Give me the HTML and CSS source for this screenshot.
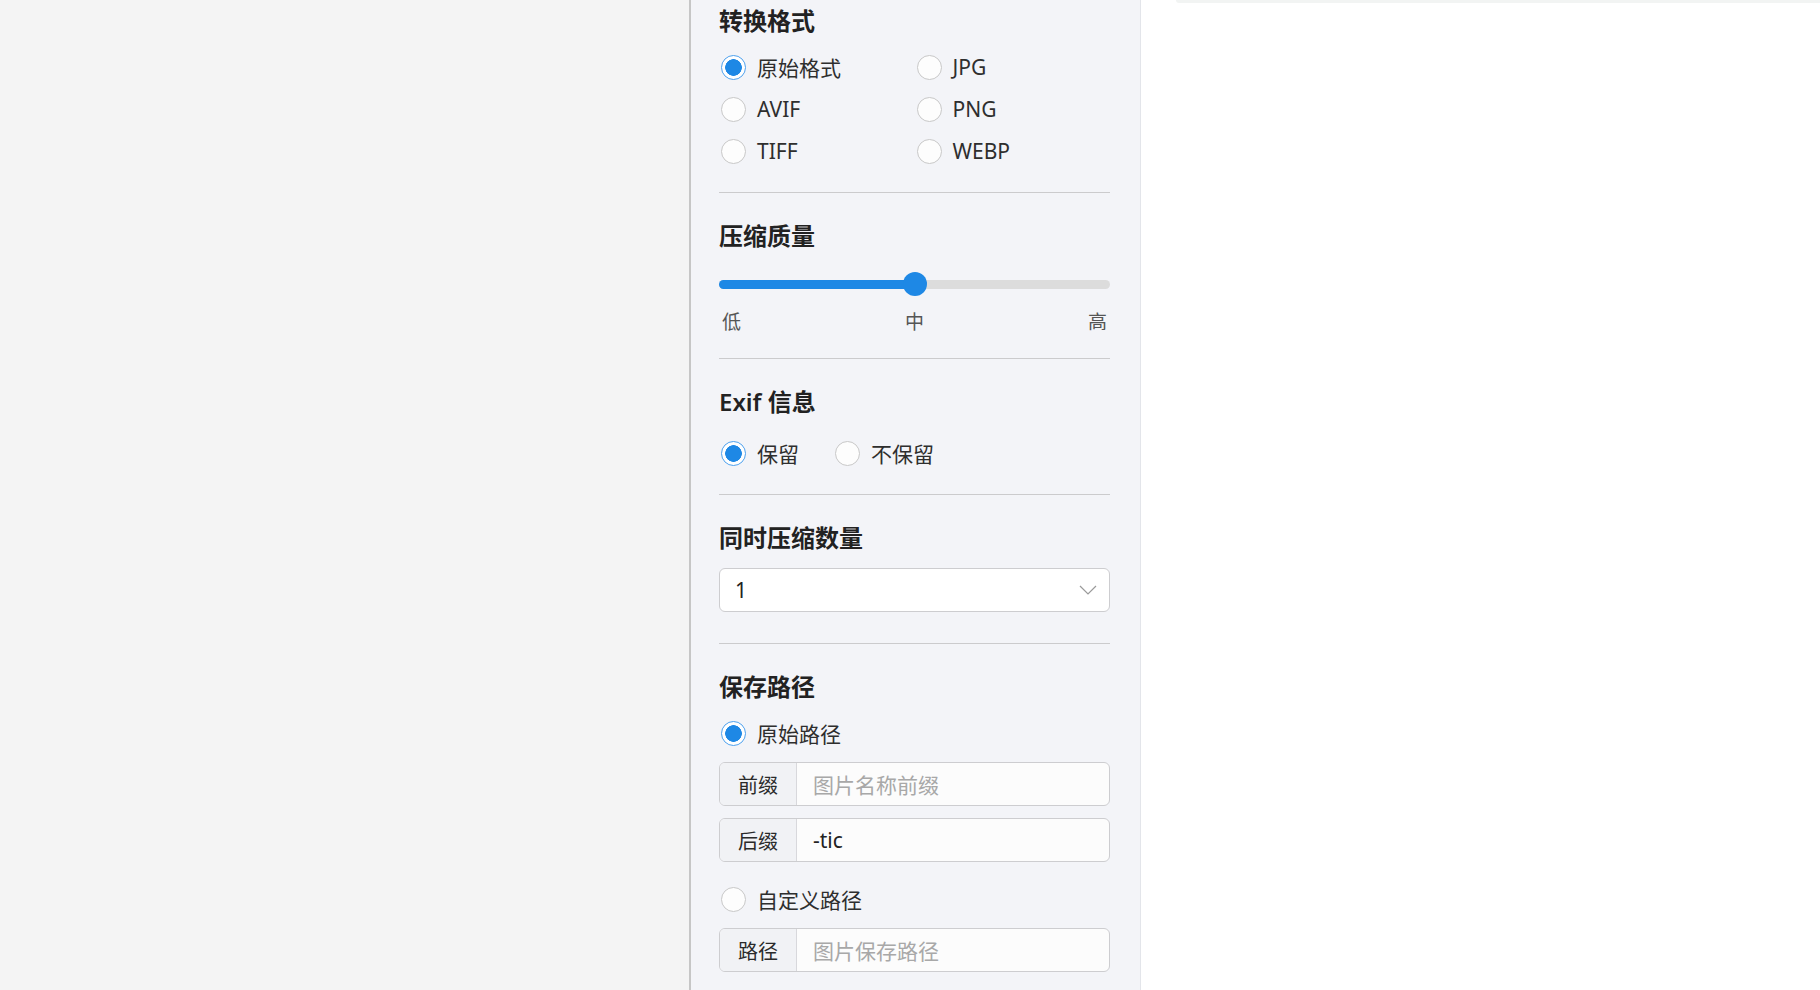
FILE: index.html
```html
<!DOCTYPE html>
<html lang="zh-CN">
<head>
<meta charset="utf-8">
<title>设置</title>
<link rel="stylesheet" href="styles.css">
</head>
<body>
<div class="app">
  <div class="left-pane"></div>
  <aside class="settings">
    <section class="sec sec-first">
      <h3 class="sec-title">转换格式</h3>
      <div class="radio-grid">
        <label class="radio"><span class="dot checked"></span><span class="rlabel">原始格式</span></label>
        <label class="radio"><span class="dot"></span><span class="rlabel">JPG</span></label>
        <label class="radio"><span class="dot"></span><span class="rlabel">AVIF</span></label>
        <label class="radio"><span class="dot"></span><span class="rlabel">PNG</span></label>
        <label class="radio"><span class="dot"></span><span class="rlabel">TIFF</span></label>
        <label class="radio"><span class="dot"></span><span class="rlabel">WEBP</span></label>
      </div>
    </section>

    <section class="sec sec-quality">
      <h3 class="sec-title">压缩质量</h3>
      <div class="slider">
        <div class="track"><div class="fill" style="width:50%"></div></div>
        <div class="thumb" style="left:50%"></div>
      </div>
      <div class="ticks"><span>低</span><span>中</span><span>高</span></div>
    </section>

    <section class="sec">
      <h3 class="sec-title">Exif 信息</h3>
      <div class="radio-inline">
        <label class="radio"><span class="dot checked"></span><span class="rlabel">保留</span></label>
        <label class="radio"><span class="dot"></span><span class="rlabel">不保留</span></label>
      </div>
    </section>

    <section class="sec sec-select">
      <h3 class="sec-title">同时压缩数量</h3>
      <div class="select">
        <span class="select-value">1</span>
        <svg class="chev" width="18" height="10" viewBox="0 0 18 10"><path d="M1 1 L9 9 L17 1" fill="none" stroke="#9a9a9a" stroke-width="1.2"/></svg>
      </div>
    </section>

    <section class="sec sec-last">
      <h3 class="sec-title">保存路径</h3>
      <label class="radio"><span class="dot checked"></span><span class="rlabel">原始路径</span></label>
      <div class="igroup ig-first">
        <span class="addon">前缀</span>
        <span class="ifield placeholder">图片名称前缀</span>
      </div>
      <div class="igroup ig-second">
        <span class="addon">后缀</span>
        <span class="ifield">-tic</span>
      </div>
      <label class="radio radio-custom"><span class="dot"></span><span class="rlabel">自定义路径</span></label>
      <div class="igroup ig-first">
        <span class="addon">路径</span>
        <span class="ifield placeholder">图片保存路径</span>
      </div>
    </section>
  </aside>
  <main class="right-pane">
    <div class="card-edge"></div>
  </main>
</div>
</body>
</html>
```

FILE: styles.css
```css
* { box-sizing: border-box; }
html, body { margin: 0; padding: 0; }
body {
  font-family: "Noto Sans", "Noto Sans CJK SC", sans-serif;
  color: #2b2b2b;
  background: #ffffff;
}
.app {
  display: flex;
  height: 990px;
  overflow: hidden;
}
.left-pane {
  flex: 0 0 689px;
  background: #f4f4f4;
}
.settings {
  flex: 0 0 452px;
  background: #f3f4f8;
  border-left: 2px solid #c6c6c6;
  border-right: 1px solid #e3e5ea;
  padding: 0 30px 0 28px;
}
.sec {
  display: flex;
  flex-direction: column;
  padding: 27px 0 20px;
  border-bottom: 1px solid #cbcbcd;
}
.sec-first { padding-top: 5px; }
.sec-quality { padding-bottom: 23px; }
.sec-select { padding-bottom: 31px; }
.sec-last { border-bottom: none; }
.sec-title {
  margin: 0 0 9px;
  font-size: 24px;
  line-height: 32px;
  font-weight: 600;
  color: #222;
}
.radio-grid {
  display: grid;
  grid-template-columns: 1fr 1fr;
}
.radio {
  display: flex;
  align-items: center;
  height: 42px;
  padding-left: 2px;
}
.dot {
  flex: 0 0 25px;
  width: 25px;
  height: 25px;
  border-radius: 50%;
  border: 1px solid #c8c8c8;
  background: #fdfdfd;
}
.dot.checked {
  border-color: #4ea1ee;
  background: radial-gradient(circle, #1e88e5 0 8px, #ffffff 8.6px);
}
.rlabel {
  margin-left: 11px;
  font-size: 21px;
  color: #2e2e2e;
}
.radio-inline {
  display: flex;
  gap: 34px;
  margin-top: 5px;
}
.slider {
  position: relative;
  height: 24px;
  margin-top: 11px;
  display: flex;
  align-items: center;
}
.track {
  width: 100%;
  height: 9px;
  border-radius: 5px;
  background: #dcdcdc;
  overflow: hidden;
}
.fill {
  height: 100%;
  background: #1e88e5;
}
.thumb {
  position: absolute;
  top: 0;
  width: 24px;
  height: 24px;
  margin-left: -12px;
  border-radius: 50%;
  background: #1e88e5;
}
.ticks {
  display: flex;
  justify-content: space-between;
  margin-top: 13px;
  padding: 0 3px;
  font-size: 19px;
  line-height: 26px;
  color: #555;
}
.select {
  margin-top: 5px;
  height: 44px;
  border: 1px solid #cdcdd0;
  border-radius: 6px;
  background: #ffffff;
  display: flex;
  align-items: center;
  justify-content: space-between;
  padding: 0 12px 0 15px;
}
.select-value { font-size: 21px; color: #222; }
.igroup {
  display: flex;
  height: 44px;
  border: 1px solid #cdcdd0;
  border-radius: 6px;
  overflow: hidden;
  background: #fcfcfc;
}
.ig-first { margin-top: 8px; }
.ig-second { margin-top: 12px; }
.addon {
  flex: 0 0 77px;
  display: flex;
  align-items: center;
  justify-content: center;
  background: #f1f2f5;
  border-right: 1px solid #d8d8dc;
  font-size: 20px;
  color: #2a2a2a;
}
.ifield {
  flex: 1;
  display: flex;
  align-items: center;
  padding-left: 16px;
  font-size: 21px;
  color: #222;
}
.ifield.placeholder { color: #a8a8a8; }
.radio-custom { margin-top: 16px; }
.right-pane {
  flex: 1;
  background: #ffffff;
  padding-left: 35px;
}
.card-edge {
  height: 3px;
  background: #f2f4f3;
  border-bottom-left-radius: 4px;
}
```
